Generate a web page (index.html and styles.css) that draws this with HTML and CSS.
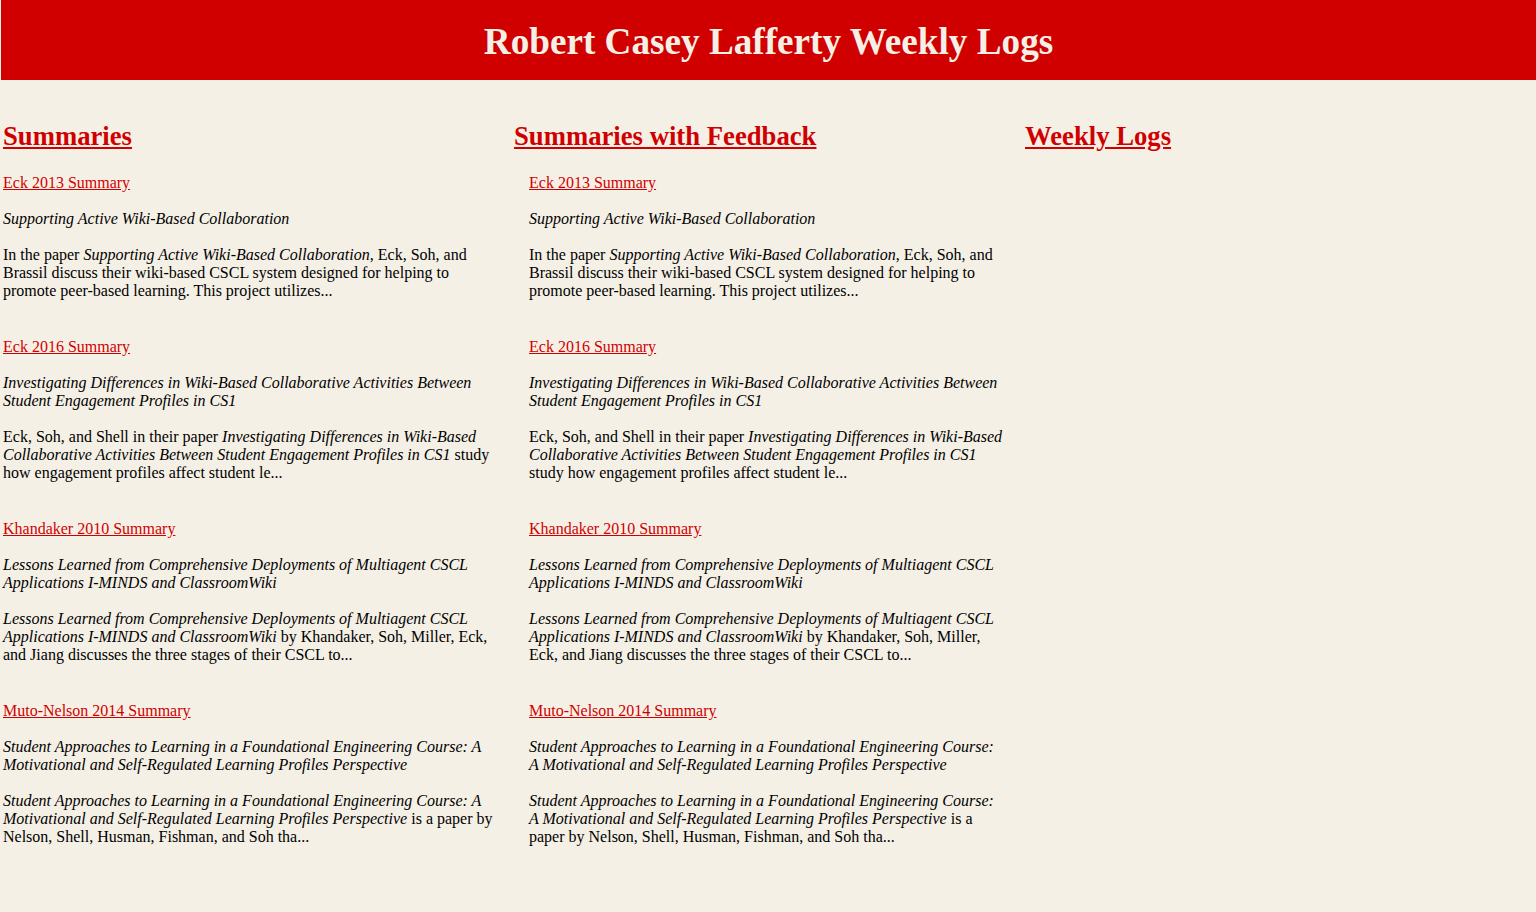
FILE: index.html
```html
<!DOCTYPE html>
<html>
<head>
<meta charset="utf-8">
<title>Robert Casey Lafferty Weekly Logs</title>
<link rel="stylesheet" href="styles.css">
</head>
<body>
<header class="banner">
  <h1 class="banner-title">Robert Casey Lafferty Weekly Logs</h1>
</header>
<main class="columns">
  <section class="col">
    <h2 class="col-heading"><a href="#">Summaries</a></h2>
    <div class="entries">
      <div class="entry">
        <p><a href="#">Eck 2013 Summary</a></p>
        <p><em>Supporting Active Wiki-Based Collaboration</em></p>
        <p>In the paper <em>Supporting Active Wiki-Based Collaboration</em>, Eck, Soh, and Brassil discuss their wiki-based CSCL system designed for helping to promote peer-based learning. This project utilizes...</p>
      </div>
      <div class="entry">
        <p><a href="#">Eck 2016 Summary</a></p>
        <p><em>Investigating Differences in Wiki-Based Collaborative Activities Between Student Engagement Profiles in CS1</em></p>
        <p>Eck, Soh, and Shell in their paper <em>Investigating Differences in Wiki-Based Collaborative Activities Between Student Engagement Profiles in CS1</em> study how engagement profiles affect student le...</p>
      </div>
      <div class="entry">
        <p><a href="#">Khandaker 2010 Summary</a></p>
        <p><em>Lessons Learned from Comprehensive Deployments of Multiagent CSCL Applications I-MINDS and ClassroomWiki</em></p>
        <p><em>Lessons Learned from Comprehensive Deployments of Multiagent CSCL Applications I-MINDS and ClassroomWiki</em> by Khandaker, Soh, Miller, Eck, and Jiang discusses the three stages of their CSCL to...</p>
      </div>
      <div class="entry">
        <p><a href="#">Muto-Nelson 2014 Summary</a></p>
        <p><em>Student Approaches to Learning in a Foundational Engineering Course: A Motivational and Self-Regulated Learning Profiles Perspective</em></p>
        <p><em>Student Approaches to Learning in a Foundational Engineering Course: A Motivational and Self-Regulated Learning Profiles Perspective</em> is a paper by Nelson, Shell, Husman, Fishman, and Soh tha...</p>
      </div>
    </div>
  </section>
  <section class="col">
    <h2 class="col-heading"><a href="#">Summaries with Feedback</a></h2>
    <div class="entries entries-indented">
      <div class="entry">
        <p><a href="#">Eck 2013 Summary</a></p>
        <p><em>Supporting Active Wiki-Based Collaboration</em></p>
        <p>In the paper <em>Supporting Active Wiki-Based Collaboration</em>, Eck, Soh, and Brassil discuss their wiki-based CSCL system designed for helping to promote peer-based learning. This project utilizes...</p>
      </div>
      <div class="entry">
        <p><a href="#">Eck 2016 Summary</a></p>
        <p><em>Investigating Differences in Wiki-Based Collaborative Activities Between Student Engagement Profiles in CS1</em></p>
        <p>Eck, Soh, and Shell in their paper <em>Investigating Differences in Wiki-Based Collaborative Activities Between Student Engagement Profiles in CS1</em> study how engagement profiles affect student le...</p>
      </div>
      <div class="entry">
        <p><a href="#">Khandaker 2010 Summary</a></p>
        <p><em>Lessons Learned from Comprehensive Deployments of Multiagent CSCL Applications I-MINDS and ClassroomWiki</em></p>
        <p><em>Lessons Learned from Comprehensive Deployments of Multiagent CSCL Applications I-MINDS and ClassroomWiki</em> by Khandaker, Soh, Miller, Eck, and Jiang discusses the three stages of their CSCL to...</p>
      </div>
      <div class="entry">
        <p><a href="#">Muto-Nelson 2014 Summary</a></p>
        <p><em>Student Approaches to Learning in a Foundational Engineering Course: A Motivational and Self-Regulated Learning Profiles Perspective</em></p>
        <p><em>Student Approaches to Learning in a Foundational Engineering Course: A Motivational and Self-Regulated Learning Profiles Perspective</em> is a paper by Nelson, Shell, Husman, Fishman, and Soh tha...</p>
      </div>
    </div>
  </section>
  <section class="col">
    <h2 class="col-heading"><a href="#">Weekly Logs</a></h2>
  </section>
</main>
</body>
</html>
```

FILE: styles.css
```css
html, body {
  margin: 0;
  padding: 0;
  background: #f5f0e6;
}

body {
  font-family: "Liberation Serif", "Times New Roman", serif;
  font-size: 16px;
  line-height: 18px;
  color: #000;
}

a {
  color: #d00000;
  text-decoration: underline;
}

.banner {
  margin-left: 1px;
  height: 80px;
  background: #d00000;
  display: flex;
  align-items: center;
  justify-content: center;
}

.banner-title {
  margin: 0;
  font-size: 37.2px;
  line-height: 42px;
  font-weight: bold;
  color: #f5f0e6;
  padding-top: 3px;
}

.columns {
  display: grid;
  grid-template-columns: 511px 511px 511px;
  padding-left: 3px;
  padding-top: 40px;
}

.col {
  min-width: 0;
}

.col-heading {
  margin: 0 0 22px 0;
  font-size: 26.7px;
  line-height: 32px;
  font-weight: bold;
}

.entries {
  width: 500px;
}

.entries-indented {
  padding-left: 15px;
  width: 476px;
}

.entry {
  margin-bottom: 38px;
}

.entry p {
  margin: 0 0 18px 0;
}

.entry p:last-child {
  margin-bottom: 0;
}
```
